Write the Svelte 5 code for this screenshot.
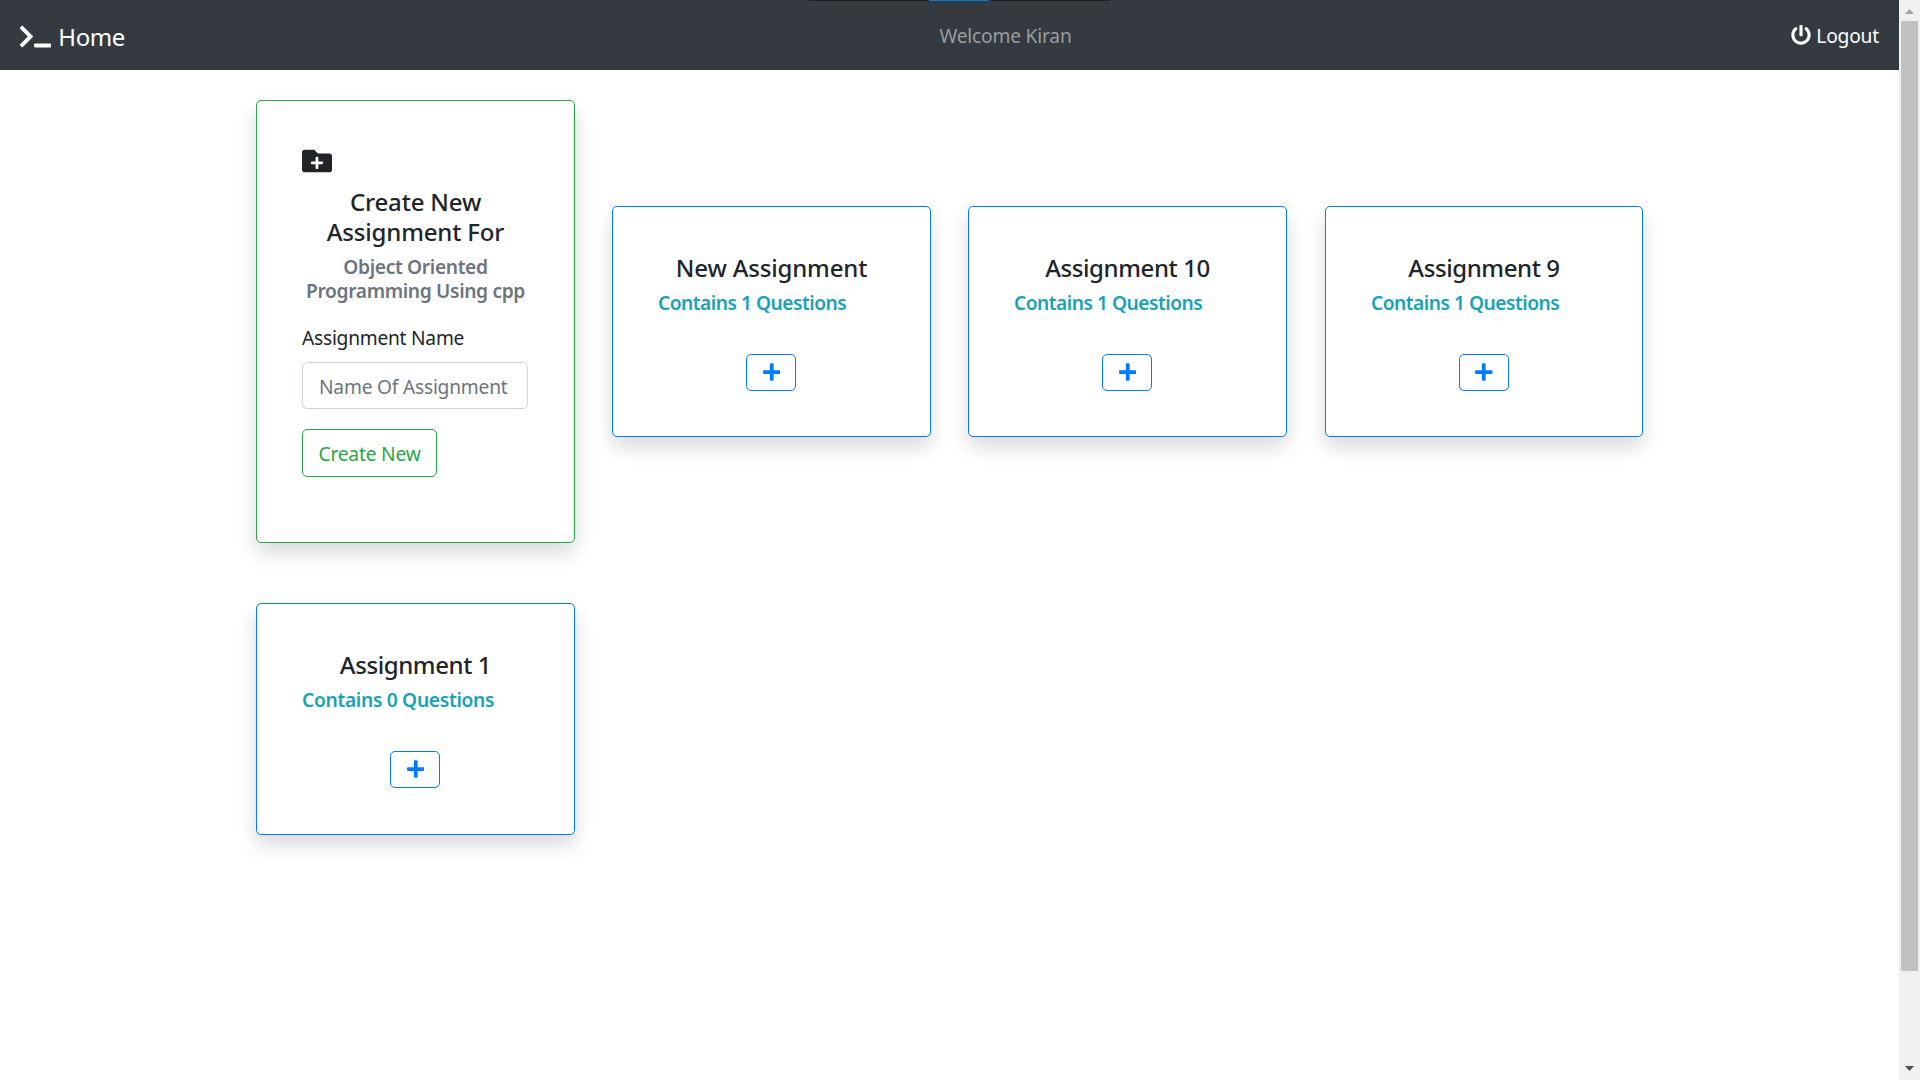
<script>
  const assignments = [
    { name: 'New Assignment', questions: 1 },
    { name: 'Assignment 10', questions: 1 },
    { name: 'Assignment 9', questions: 1 },
    { name: 'Assignment 1', questions: 0 },
  ];
</script>

<div class="screen">
  <div class="page">
    <nav class="navbar">
      <a class="brand" href="#home">
        <svg class="terminal" viewBox="0 0 640 512"><path d="M257.981 272.971L63.638 467.314c-9.373 9.373-24.569 9.373-33.941 0L7.029 444.647c-9.357-9.357-9.375-24.522-.04-33.901L161.011 256 6.99 101.255c-9.335-9.379-9.317-24.544.04-33.901l22.667-22.667c9.373-9.373 24.569-9.373 33.941 0L257.981 239.03c9.373 9.372 9.373 24.568 0 33.941zM640 456v-32c0-13.255-10.745-24-24-24H312c-13.255 0-24 10.745-24 24v32c0 13.255 10.745 24 24 24h304c13.255 0 24-10.745 24-24z" /></svg>
        <span>Home</span>
      </a>
      <span class="welcome">Welcome Kiran</span>
      <a class="logout" href="#logout">
        <svg class="power" viewBox="0 0 512 512"><path d="M400 54.1c63 45 104 118.6 104 201.9 0 136.8-110.8 247.7-247.5 248C120 504.3 8.2 393 8 256.4 7.9 173.1 48.9 99.3 111.8 54.2c11.7-8.3 28-4.8 35 7.7L162.6 90c5.9 10.5 3.1 23.8-6.6 31-41.5 30.8-68 79.6-68 134.9-.1 92.3 74.5 168.1 168 168.1 91.6 0 168.6-74.2 168-169.1-.3-51.8-24.7-101.8-68.1-134-9.7-7.2-12.4-20.5-6.5-30.9l15.8-28.1c7-12.4 23.2-16.1 34.8-7.8zM296 264V24c0-13.3-10.7-24-24-24h-32c-13.3 0-24 10.7-24 24v240c0 13.3 10.7 24 24 24h32c13.3 0 24-10.7 24-24z" /></svg>
        <span>Logout</span>
      </a>
    </nav>

    <main class="grid">
      <section class="card create">
        <svg class="folder" viewBox="0 0 512 512"><path d="M464,128H272L208,64H48A48,48,0,0,0,0,112V400a48,48,0,0,0,48,48H464a48,48,0,0,0,48-48V176A48,48,0,0,0,464,128ZM359.5,296a16,16,0,0,1-16,16h-64v64a16,16,0,0,1-16,16h-16a16,16,0,0,1-16-16V312h-64a16,16,0,0,1-16-16V280a16,16,0,0,1,16-16h64V200a16,16,0,0,1,16-16h16a16,16,0,0,1,16,16v64h64a16,16,0,0,1,16,16Z" /></svg>
        <h5>Create New<br />Assignment For</h5>
        <h6 class="subject">Object Oriented<br />Programming Using cpp</h6>
        <label for="assignment-name">Assignment Name</label>
        <input id="assignment-name" type="text" placeholder="Name Of Assignment" />
        <button class="create-btn">Create New</button>
      </section>

      {#each assignments as a}
        <section class="card item">
          <h5 class:numbered={/\d/.test(a.name)}>{a.name}</h5>
          <h6 class="count" class:empty={a.questions === 0}>Contains {a.questions} Questions</h6>
          <button class="add" aria-label="Add question">
            <svg class="plus" viewBox="0 0 448 512"><path d="M416 208H272V64c0-17.67-14.33-32-32-32h-32c-17.67 0-32 14.33-32 32v144H32c-17.67 0-32 14.33-32 32v32c0 17.67 14.33 32 32 32h144v144c0 17.67 14.33 32 32 32h32c17.67 0 32-14.33 32-32V304h144c17.67 0 32-14.33 32-32v-32c0-17.67-14.33-32-32-32z" /></svg>
          </button>
        </section>
      {/each}
    </main>
  </div>

  <div class="scrollbar">
    <svg class="arrow up" viewBox="0 0 9 5"><path d="M0 5L4.5 0L9 5z" /></svg>
    <div class="thumb"></div>
    <svg class="arrow down" viewBox="0 0 9 5"><path d="M0 0L4.5 5L9 0z" /></svg>
  </div>

  <div class="top-strip"><i></i></div>
</div>

<style>
  :global(body) {
    margin: 0;
    overflow: hidden;
    background: #fff;
  }
  .screen {
    position: relative;
    display: flex;
    width: 1920px;
    height: 1080px;
    overflow: hidden;
    font-family: 'Segoe UI', 'Noto Sans', 'Open Sans', sans-serif;
    font-size: 19.2px;
    line-height: 30px;
    color: #212529;
  }
  .page {
    flex: 1;
    min-width: 0;
  }
  svg {
    display: block;
    flex: none;
    fill: currentColor;
  }
  .navbar {
    display: grid;
    grid-template-columns: 1fr auto 1fr;
    align-items: center;
    box-sizing: border-box;
    height: 70px;
    padding: 0 20px;
    background: #343a40;
  }
  .navbar a {
    display: flex;
    align-items: center;
    color: #fff;
    text-decoration: none;
  }
  .brand {
    gap: 7px;
    font-size: 24px;
    letter-spacing: -0.4px;
    padding-top: 4px;
  }
  .terminal {
    width: 31.25px;
    height: 25px;
    margin-top: -2px;
  }
  .welcome {
    color: #999c9f;
    letter-spacing: -0.2px;
    padding: 2px 0 0 112px;
  }
  .navbar .logout {
    justify-self: end;
    gap: 5px;
    letter-spacing: -0.2px;
    padding-top: 2px;
  }
  .power {
    width: 20px;
    height: 20px;
    margin-top: -2px;
  }
  .grid {
    display: grid;
    grid-template-columns: 319px 319px 320px 318px;
    gap: 60px 37px;
    align-items: center;
    padding: 30px 0 0 256px;
  }
  .card {
    display: flex;
    flex-direction: column;
    align-items: flex-start;
    box-sizing: border-box;
    width: 100%;
    max-width: 319px;
    padding: 45px;
    background: #fff;
    border: 1px solid #007bff;
    border-radius: 5px;
    box-shadow: 0 10px 20px rgba(0, 0, 0, 0.15);
  }
  .create {
    height: 443px;
    border-color: #28a745;
  }
  .item {
    height: 231px;
    padding-top: 46px;
  }
  .item:last-child {
    height: 232px;
  }
  .folder {
    width: 30px;
    height: 30px;
    margin-bottom: 11px;
  }
  h5,
  h6 {
    margin: 0;
    font-weight: 500;
    white-space: nowrap;
  }
  h5 {
    align-self: center;
    text-align: center;
    font-size: 24px;
    line-height: 30px;
    letter-spacing: -0.17px;
  }
  .numbered {
    letter-spacing: -0.4px;
  }
  h6 {
    margin-top: 8px;
    font-size: 19.2px;
    font-weight: 600;
    line-height: 24px;
    letter-spacing: -0.35px;
  }
  .subject {
    align-self: center;
    text-align: center;
    color: #6c757d;
  }
  .count {
    color: #17a2b8;
    letter-spacing: -0.5px;
  }
  .empty {
    letter-spacing: -0.3px;
  }
  label {
    margin-top: 20px;
    letter-spacing: -0.25px;
  }
  input,
  button {
    box-sizing: border-box;
    font: inherit;
    background: #fff;
    border-radius: 5px;
  }
  input {
    width: 226px;
    height: 47px;
    margin-top: 9px;
    padding: 2px 15px 0 16px;
    border: 1px solid #ced4da;
    letter-spacing: -0.22px;
  }
  input::placeholder {
    color: #6c757d;
    opacity: 1;
  }
  .create-btn {
    width: 135px;
    height: 48px;
    margin-top: 20px;
    padding: 2px 0 0;
    border: 1px solid #28a745;
    color: #28a745;
    letter-spacing: -0.2px;
  }
  .add {
    display: flex;
    align-self: center;
    align-items: center;
    justify-content: center;
    width: 50px;
    height: 37px;
    margin: 39px 1px 0 0;
    padding: 0 0 2px 1px;
    border: 1px solid #007bff;
    color: #007bff;
  }
  .plus {
    width: 17.5px;
    height: 20px;
  }
  .scrollbar {
    display: flex;
    flex-direction: column;
    align-items: center;
    box-sizing: border-box;
    width: 21px;
    height: 1080px;
    padding: 9px 2px;
    background: #f1f1f1;
  }
  .arrow {
    width: 9px;
    height: 5px;
  }
  .up {
    color: #a3a3a3;
  }
  .down {
    margin-top: auto;
    color: #505050;
  }
  .thumb {
    width: 17px;
    height: 950px;
    margin-top: 7px;
    background: #c1c1c1;
  }
  .top-strip {
    position: absolute;
    top: 0;
    left: 809px;
    display: flex;
    box-sizing: border-box;
    width: 301px;
    height: 1px;
    padding-left: 120px;
    background: #1f1f1f;
  }
  .top-strip i {
    width: 60px;
    background: #0078d7;
  }
</style>
